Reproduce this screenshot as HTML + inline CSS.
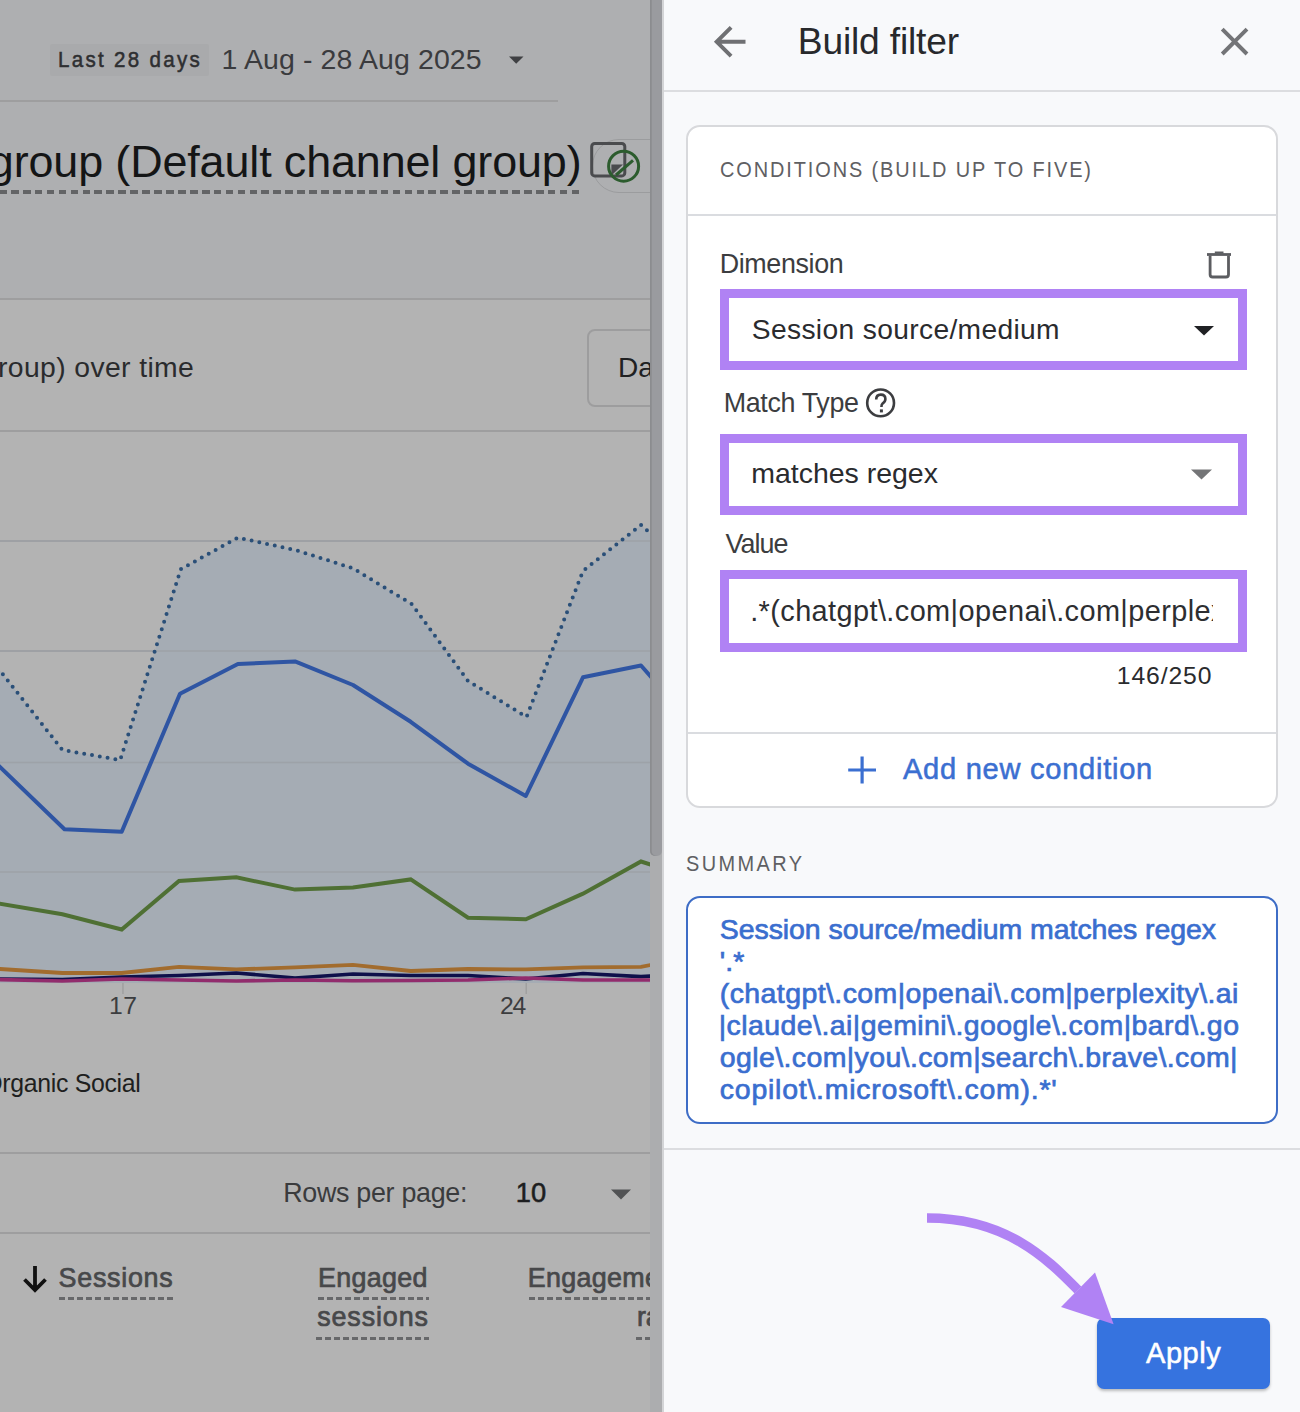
<!DOCTYPE html>
<html><head><meta charset="utf-8"><style>
html,body{margin:0;padding:0;width:1300px;height:1412px;overflow:hidden;background:#f8f9fb}
.t{position:absolute;white-space:pre;font-family:"Liberation Sans",sans-serif;}
</style></head><body>
<div style="position:absolute;left:0;top:0;width:650px;height:1412px;overflow:hidden"><div style="position:absolute;left:0px;top:0px;width:650px;height:299px;background:#aeafb1;"></div><div style="position:absolute;left:0px;top:299px;width:650px;height:1113px;background:#b3b3b3;"></div><div style="position:absolute;left:50px;top:44px;width:159px;height:32px;background:#a9aaac;border-radius:2px"></div><div class="t" style="left:57.80px;top:47.80px;font-size:22.82px;line-height:22.82px;letter-spacing:2.556px;-webkit-text-stroke:0.55px #2e2f31;transform:scaleX(0.9);transform-origin:0 0;color:#2e2f31;">Last 28 days</div><div class="t" style="left:221.50px;top:45.00px;font-size:28.49px;line-height:28.49px;letter-spacing:0.111px;color:#3a3b3e;">1 Aug - 28 Aug 2025</div><svg style="position:absolute;left:0;top:0" width="650" height="300"><polygon points="509,56.5 523.5,56.5 516.2,63.8" fill="#3f4043"/></svg><div style="position:absolute;left:0px;top:100px;width:558px;height:2px;background:#9e9e9f;"></div><div class="t" style="left:-11.20px;top:139.60px;font-size:44.91px;line-height:44.91px;letter-spacing:-0.136px;color:#141516;">group (Default channel group)</div><div style="position:absolute;left:-0.6px;top:190px;width:581.2px;height:3.9px;background:repeating-linear-gradient(90deg,#636466 0 7.7px,transparent 7.7px 11.93px);"></div><div style="position:absolute;left:592.3px;top:138.7px;width:120px;height:54.6px;border:1.6px solid #9b9c9e;border-radius:27.3px;box-sizing:border-box"></div><svg style="position:absolute;left:0;top:0" width="650" height="300"><rect x="591.7" y="143.4" width="33.1" height="32.5" rx="3" fill="none" stroke="#4a4b4e" stroke-width="3"/><path d="M611.4,164.6 L623,164.6 L611.4,175.5 Z" fill="#4a4b4e"/><circle cx="623.6" cy="166.2" r="15" fill="none" stroke="#2c5c2e" stroke-width="3"/><path d="M616,175 L633,160.4" fill="none" stroke="#2c5c2e" stroke-width="3"/></svg><div style="position:absolute;left:0px;top:298px;width:650px;height:2px;background:#9e9e9f;"></div><div class="t" style="left:-2.00px;top:352.60px;font-size:28.34px;line-height:28.34px;letter-spacing:0.379px;color:#2a2b2d;">roup) over time</div><div style="position:absolute;left:586.6px;top:329.3px;width:100px;height:77.5px;border:2px solid #9d9d9e;border-radius:8px;box-sizing:border-box"></div><div class="t" style="left:617.90px;top:354.10px;font-size:28.05px;line-height:28.05px;color:#202122;">Da</div><div style="position:absolute;left:0px;top:430px;width:650px;height:2px;background:#9e9e9f;"></div><svg style="position:absolute;left:0;top:0" width="650" height="1412"><rect x="0" y="540.25" width="650" height="1.5" fill="#9d9fa2"/><rect x="0" y="650.25" width="650" height="1.5" fill="#9d9fa2"/><rect x="0" y="761.75" width="650" height="1.5" fill="#9d9fa2"/><rect x="0" y="871.25" width="650" height="1.5" fill="#9d9fa2"/><polygon points="-2.0,668.0 62.4,750.0 120.2,760.0 180.8,569.2 237.9,537.6 296.7,550.4 353.0,568.3 411.8,604.1 468.0,680.9 526.5,717.0 583.0,570.9 641.0,524.9 652.0,535.0 652,983 -2,983" fill="#a5acb4"/><rect x="0" y="540.25" width="650" height="1.5" fill="#9a9ea3" opacity="0.7"/><rect x="0" y="650.25" width="650" height="1.5" fill="#9a9ea3" opacity="0.7"/><rect x="0" y="761.75" width="650" height="1.5" fill="#9a9ea3" opacity="0.7"/><rect x="0" y="871.25" width="650" height="1.5" fill="#9a9ea3" opacity="0.7"/><polyline points="-2.0,668.0 62.4,750.0 120.2,760.0 180.8,569.2 237.9,537.6 296.7,550.4 353.0,568.3 411.8,604.1 468.0,680.9 526.5,717.0 583.0,570.9 641.0,524.9 652.0,535.0" fill="none" stroke="#2a4f78" stroke-width="4" stroke-dasharray="0 7.9" stroke-linecap="round"/><polyline points="-2.0,765.0 64.5,829.2 121.7,831.8 180.0,693.7 237.9,664.0 295.0,661.4 353.0,685.0 410.7,721.8 468.0,763.7 525.8,796.0 583.0,677.3 641.0,665.5 652.0,678.0" fill="none" stroke="#2f55a3" stroke-width="4" stroke-linejoin="round"/><polyline points="-2.0,903.5 62.4,914.2 121.7,929.5 179.0,880.9 236.3,877.3 295.0,889.6 353.0,887.6 410.7,879.4 468.0,917.7 525.8,919.3 583.0,893.7 641.0,861.5 652.0,865.0" fill="none" stroke="#4f7034" stroke-width="4"/><polyline points="-2.0,968.9 62.4,973.0 121.7,973.0 179.0,966.9 236.3,969.4 295.0,967.4 353.0,964.8 410.7,971.0 468.0,969.0 525.8,969.4 583.0,967.4 641.0,966.9 652.0,964.8" fill="none" stroke="#a26c2e" stroke-width="3.8"/><polyline points="-2.0,979.0 62.4,979.6 121.7,977.0 179.0,975.5 236.3,973.0 295.0,978.0 353.0,974.0 410.7,975.5 468.0,975.5 525.8,979.0 583.0,973.5 641.0,976.6 652.0,976.0" fill="none" stroke="#0e104a" stroke-width="3.6"/><polyline points="-2.0,979.6 62.4,981.0 121.7,979.0 179.0,980.0 236.3,981.0 295.0,980.0 353.0,980.7 410.7,980.5 468.0,980.0 525.8,978.0 583.0,980.0 641.0,980.0 652.0,980.0" fill="none" stroke="#922c6c" stroke-width="3.6"/><rect x="122.2" y="983" width="1.5" height="11" fill="#a0a0a0"/><rect x="525.5" y="983" width="1.5" height="11" fill="#a0a0a0"/></svg><div class="t" style="left:108.90px;top:993.80px;font-size:24.71px;line-height:24.71px;letter-spacing:0.6px;color:#3c3d3f;">17</div><div class="t" style="left:499.90px;top:994.00px;font-size:24.71px;line-height:24.71px;letter-spacing:-1.1px;color:#3c3d3f;">24</div><div class="t" style="left:-16.80px;top:1071.80px;font-size:24.85px;line-height:24.85px;letter-spacing:-0.3px;color:#1e1f20;">Organic Social</div><div style="position:absolute;left:0px;top:1152px;width:650px;height:2px;background:#9e9e9f;"></div><div class="t" style="left:283.20px;top:1179.90px;font-size:26.89px;line-height:26.89px;letter-spacing:-0.308px;color:#3a3b3d;">Rows per page:</div><div class="t" style="left:515.80px;top:1178.90px;font-size:27.33px;line-height:27.33px;letter-spacing:-0.1px;-webkit-text-stroke:0.55px #1d1e20;color:#1d1e20;">10</div><svg style="position:absolute;left:0;top:0" width="650" height="1412"><polygon points="611,1189.5 631,1189.5 621,1199.4" fill="#515254"/><path d="M35,1266 V1290 M24.5,1279.5 L35,1290 L45.5,1279.5" fill="none" stroke="#111" stroke-width="3.8"/></svg><div style="position:absolute;left:0px;top:1232px;width:650px;height:2px;background:#9e9e9f;"></div><div class="t" style="left:58.60px;top:1264.80px;font-size:26.89px;line-height:26.89px;letter-spacing:0.714px;-webkit-text-stroke:0.7px #47484a;color:#47484a;">Sessions</div><div style="position:absolute;left:59px;top:1297px;width:114px;height:3px;background:repeating-linear-gradient(90deg,#67686a 0 6px,transparent 6px 9px);"></div><div class="t" style="left:318.00px;top:1264.80px;font-size:26.89px;line-height:26.89px;letter-spacing:0.3px;-webkit-text-stroke:0.7px #47484a;color:#47484a;">Engaged</div><div style="position:absolute;left:318px;top:1297px;width:111px;height:3px;background:repeating-linear-gradient(90deg,#67686a 0 6px,transparent 6px 9px);"></div><div class="t" style="left:317.20px;top:1304.20px;font-size:26.89px;line-height:26.89px;letter-spacing:0.886px;-webkit-text-stroke:0.7px #47484a;color:#47484a;">sessions</div><div style="position:absolute;left:316px;top:1337.3px;width:113px;height:3px;background:repeating-linear-gradient(90deg,#67686a 0 6px,transparent 6px 9px);"></div><div class="t" style="left:527.70px;top:1264.80px;font-size:26.89px;line-height:26.89px;letter-spacing:0.333px;-webkit-text-stroke:0.7px #47484a;color:#47484a;">Engagement</div><div style="position:absolute;left:528.5px;top:1297px;width:130px;height:3px;background:repeating-linear-gradient(90deg,#67686a 0 6px,transparent 6px 9px);"></div><div class="t" style="left:636.90px;top:1304.40px;font-size:26.89px;line-height:26.89px;-webkit-text-stroke:0.7px #47484a;color:#47484a;">rate</div><div style="position:absolute;left:636px;top:1337.3px;width:30px;height:3px;background:repeating-linear-gradient(90deg,#67686a 0 6px,transparent 6px 9px);"></div></div>
<div style="position:absolute;left:650px;top:0px;width:12px;height:1412px;background:#acadaf;"></div><div style="position:absolute;left:650px;top:-10px;width:11.7px;height:866px;background:#9a9b9f;border-radius:0 0 5px 5px;box-shadow:inset 1.7px 0 0 #8b8c8f"></div><div style="position:absolute;left:662px;top:0px;width:2px;height:1412px;background:#d3d4d6;"></div><div style="position:absolute;left:664px;top:0px;width:636px;height:1412px;background:#f8f9fb;"></div><svg style="position:absolute;left:706.4px;top:18.3px" width="48" height="48" viewBox="0 0 24.3 24.3"><path d="M20 11H7.83l5.59-5.59L12 4l-8 8 8 8 1.41-1.41L7.83 13H20v-2z" fill="#6f7073"/></svg><div class="t" style="left:797.80px;top:22.80px;font-size:37.21px;line-height:37.21px;letter-spacing:-0.182px;color:#28292c;">Build filter</div><svg style="position:absolute;left:1210.5px;top:18.4px" width="48" height="48" viewBox="0 0 24.4 24.4"><path d="M19 6.41L17.59 5 12 10.59 6.41 5 5 6.41 10.59 12 5 17.59 6.41 19 12 13.41 17.59 19 19 17.59 13.41 12z" fill="#737477"/></svg><div style="position:absolute;left:664px;top:90px;width:636px;height:2px;background:#dcdde0;"></div><div style="position:absolute;left:686px;top:124.5px;width:591.5px;height:683px;background:#fff;border:2px solid #d8d9dc;border-radius:14px;box-sizing:border-box"></div><div class="t" style="left:719.92px;top:157.90px;font-size:22.67px;line-height:22.67px;letter-spacing:2.154px;transform:scaleX(0.88);transform-origin:0 0;color:#5f6063;">CONDITIONS (BUILD UP TO FIVE)</div><div style="position:absolute;left:688px;top:213.5px;width:588px;height:2px;background:#dadce0;"></div><div class="t" style="left:719.70px;top:251.00px;font-size:26.89px;line-height:26.89px;letter-spacing:-0.375px;color:#3c3d40;">Dimension</div><svg style="position:absolute;left:1200px;top:245px" width="40" height="40"><path d="M7,9.5 H31" stroke="#5c5d61" stroke-width="2.8"/><path d="M14.8,7.6 H23.5" stroke="#5c5d61" stroke-width="2.2"/><path d="M10.1,10.8 V29.5 Q10.1,32 12.6,32 H26 Q28.5,32 28.5,29.5 V10.8" fill="none" stroke="#5c5d61" stroke-width="2.8"/></svg><div style="position:absolute;left:720px;top:289.1px;width:526.8px;height:80.7px;border:9.8px solid #b082f4;box-sizing:border-box;background:#fff"></div><div class="t" style="left:751.80px;top:315.10px;font-size:28.2px;line-height:28.2px;letter-spacing:0.35px;color:#2a2b2e;">Session source/medium</div><div class="t" style="left:723.70px;top:390.30px;font-size:26.89px;line-height:26.89px;letter-spacing:-0.356px;color:#3c3d40;">Match Type</div><svg style="position:absolute;left:862px;top:384px" width="38" height="38" viewBox="0 0 38 38"><circle cx="18.6" cy="18.9" r="13.4" fill="none" stroke="#3c3d40" stroke-width="2.6"/><path d="M14.2,15.6 Q14.2,10.6 18.8,10.6 Q23.4,10.6 23.4,15 Q23.4,17.6 20.8,19.3 Q19.4,20.5 19.4,23" fill="none" stroke="#3c3d40" stroke-width="2.6"/><rect x="17.9" y="25.4" width="3" height="3" fill="#3c3d40"/></svg><div style="position:absolute;left:720px;top:434.3px;width:526.8px;height:81.1px;border:9.8px solid #b082f4;box-sizing:border-box;background:#fff"></div><div class="t" style="left:751.20px;top:458.50px;font-size:28.49px;line-height:28.49px;letter-spacing:-0.008px;color:#2a2b2e;">matches regex</div><svg style="position:absolute;left:0;top:0" width="1300" height="700"><polygon points="1194,326 1214,326 1204,335.6" fill="#202124"/><polygon points="1191,469.5 1212,469.5 1201.5,479.5" fill="#747577"/></svg><div class="t" style="left:725.40px;top:530.80px;font-size:26.89px;line-height:26.89px;letter-spacing:-0.925px;color:#3c3d40;">Value</div><div style="position:absolute;left:720px;top:570.3px;width:526.8px;height:81.3px;border:9.8px solid #b082f4;box-sizing:border-box;background:#fff"></div><div style="position:absolute;left:729px;top:580px;width:483.5px;height:62px;overflow:hidden"><div class="t" style="left:21.20px;top:16.80px;font-size:28.92px;line-height:28.92px;letter-spacing:0.4px;color:#2d2e31;">.*(chatgpt\.com|openai\.com|perplexity\.ai|claude</div></div><div class="t" style="left:1116.80px;top:664.10px;font-size:24.71px;line-height:24.71px;letter-spacing:0.9px;color:#2a2b2d;">146/250</div><div style="position:absolute;left:688px;top:731.5px;width:588px;height:2px;background:#dadce0;"></div><svg style="position:absolute;left:845px;top:753px" width="36" height="34"><path d="M17.1,3.6 V30.4 M3.2,17 H31" stroke="#3b6fd1" stroke-width="3.2"/></svg><div class="t" style="left:902.90px;top:754.70px;font-size:29.07px;line-height:29.07px;letter-spacing:0.738px;-webkit-text-stroke:0.55px #3b6fd1;color:#3b6fd1;">Add new condition</div><div class="t" style="left:686.12px;top:851.80px;font-size:22.67px;line-height:22.67px;letter-spacing:2.723px;transform:scaleX(0.88);transform-origin:0 0;color:#5f6063;">SUMMARY</div><div style="position:absolute;left:686px;top:896px;width:591.5px;height:227.5px;background:#fff;border:2px solid #3e6dc6;border-radius:14px;box-sizing:border-box"></div><div class="t" style="left:719.80px;top:914.60px;font-size:28.49px;line-height:28.49px;letter-spacing:-0.071px;-webkit-text-stroke:0.7px #3a6ecf;color:#3a6ecf;">Session source/medium matches regex</div><div class="t" style="left:719.80px;top:946.70px;font-size:28.49px;line-height:28.49px;-webkit-text-stroke:0.7px #3a6ecf;color:#3a6ecf;">'.*</div><div class="t" style="left:719.80px;top:978.80px;font-size:28.49px;line-height:28.49px;letter-spacing:0.415px;-webkit-text-stroke:0.7px #3a6ecf;color:#3a6ecf;">(chatgpt\.com|openai\.com|perplexity\.ai</div><div class="t" style="left:718.80px;top:1010.90px;font-size:28.49px;line-height:28.49px;letter-spacing:0.426px;-webkit-text-stroke:0.7px #3a6ecf;color:#3a6ecf;">|claude\.ai|gemini\.google\.com|bard\.go</div><div class="t" style="left:719.80px;top:1043.00px;font-size:28.49px;line-height:28.49px;letter-spacing:0.384px;-webkit-text-stroke:0.7px #3a6ecf;color:#3a6ecf;">ogle\.com|you\.com|search\.brave\.com|</div><div class="t" style="left:719.80px;top:1075.10px;font-size:28.49px;line-height:28.49px;letter-spacing:0.754px;-webkit-text-stroke:0.7px #3a6ecf;color:#3a6ecf;">copilot\.microsoft\.com).*'</div><div style="position:absolute;left:664px;top:1148px;width:636px;height:2px;background:#dcdde0;"></div><div style="position:absolute;left:1097px;top:1318.4px;width:173px;height:71px;background:#3673df;border-radius:7px;box-shadow:0 2px 3px rgba(0,0,0,0.25)"></div><div class="t" style="left:1146.00px;top:1339.40px;font-size:29.07px;line-height:29.07px;letter-spacing:0.5px;-webkit-text-stroke:0.55px #ffffff;color:#ffffff;">Apply</div><svg style="position:absolute;left:0;top:0" width="1300" height="1412"><path d="M927,1218 C1009,1218 1050,1262 1078,1290" fill="none" stroke="#b082f4" stroke-width="9.6"/><polygon points="1061,1307 1095,1272.5 1113.6,1324.3" fill="#b082f4"/></svg>
</body></html>
